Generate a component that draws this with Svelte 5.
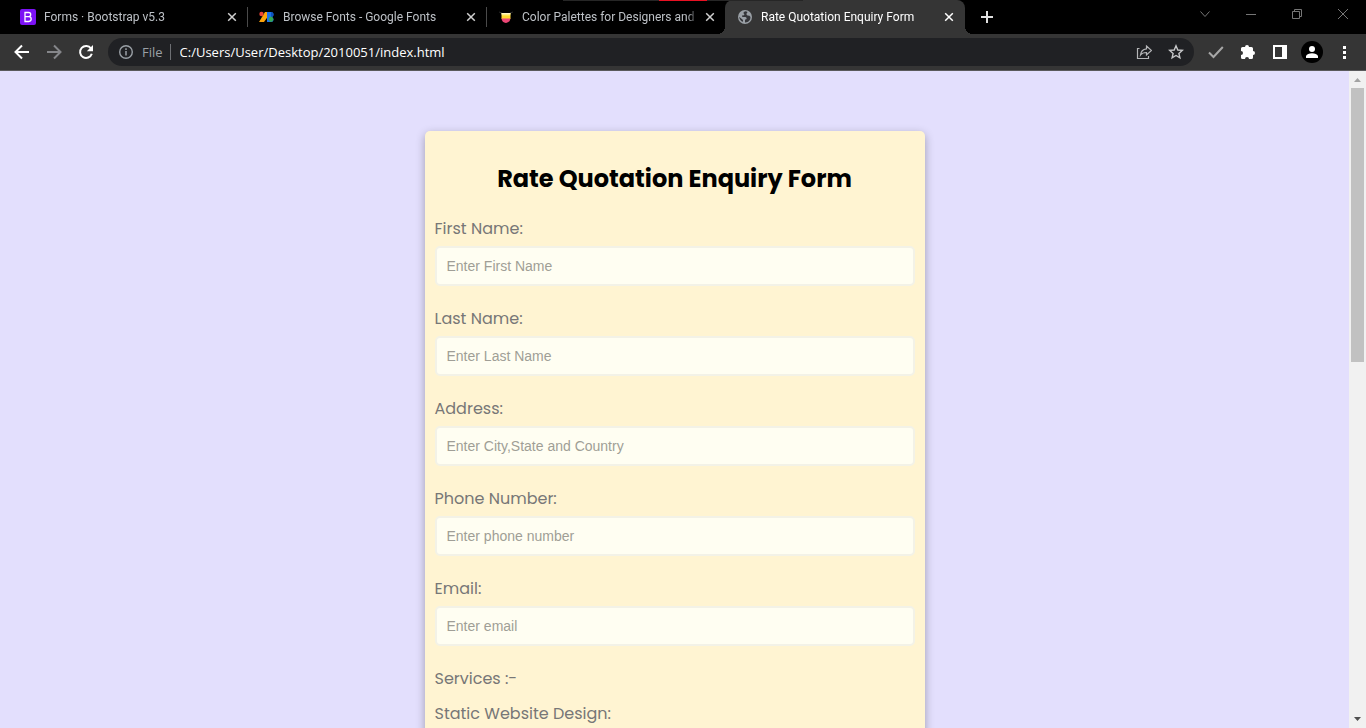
<script>
  const tabs = [
    { icon: 'bootstrap', title: 'Forms · Bootstrap v5.3' },
    { icon: 'fonts', title: 'Browse Fonts - Google Fonts' },
    { icon: 'palette', title: 'Color Palettes for Designers and' },
    { icon: 'globe', title: 'Rate Quotation Enquiry Form', active: true }
  ];
  const fields = [
    { id: 'first-name', label: 'First Name:', hint: 'Enter First Name', type: 'text' },
    { id: 'last-name', label: 'Last Name:', hint: 'Enter Last Name', type: 'text' },
    { id: 'address', label: 'Address:', hint: 'Enter City,State and Country', type: 'text' },
    { id: 'phone', label: 'Phone Number:', hint: 'Enter phone number', type: 'tel' },
    { id: 'email', label: 'Email:', hint: 'Enter email', type: 'email' }
  ];
</script>

<div class="browser">
  <div class="edge"><span></span><span class="red"></span><span></span></div>
  <header class="tabstrip">
    {#each tabs as tab}
      <div class="tab" class:active={tab.active}>
        <svg class="favicon" viewBox="0 0 16 16" aria-hidden="true">
          {#if tab.icon === 'bootstrap'}
            <rect width="16" height="16" rx="2" fill="#7c12f5" />
            <path d="M5 3.500H8.600Q10.700 3.500 10.700 5.600Q10.700 7.700 8.800 7.700H5V3.500ZM5 7.700H9Q11.200 7.700 11.200 10.100Q11.200 12.500 8.800 12.500H5V7.700Z" fill="none" stroke="#fff" stroke-width="1.300" />
          {:else if tab.icon === 'fonts'}
            <path d="M6 3H10V6L5 13H0Z" fill="#fba30a" />
            <circle cx="2.500" cy="5" r="2.200" fill="#ea4335" />
            <path d="M8 3H12A2.500 2.500 0 0 1 12 8A2.500 2.500 0 0 1 12 13H8Z" fill="#1a73e8" />
            <path d="M12 3A2.500 2.500 0 0 1 12 8Z" fill="#0d52bf" />
            <path d="M12 7.500A2.800 2.800 0 0 1 12 13A2.800 2.800 0 0 1 12 7.500Z" fill="#34a853" />
          {:else if tab.icon === 'palette'}
            <path d="M1 3L4 4M15 3L12 4" stroke="#292929" />
            <path d="M3.500 4H12.500V7H3.500Z" fill="#ffe44d" />
            <path d="M3.500 7H12.500V10H3.500Z" fill="#ffd72e" />
            <path d="M3.500 9.500H12.500Q12 13.500 8 14Q4 13.500 3.500 9.500Z" fill="#ed4776" />
            <path d="M3.500 4H12.500V5.500H3.500Z" fill="#fff6c2" />
          {:else}
            <circle cx="8" cy="8" r="7" fill="#9aa0a6" />
            <path d="M8.500 2.300Q6 2.800 6.500 4.200Q8 5 7 6.200L5 6.500L5.300 8H8.500Q10 8.300 9.600 10L8 10.700V13.500Q11.500 13.500 13.200 10.200Q14.200 7.700 12.500 6.800L10.500 6.600Q9.200 6 9.500 4.600Q10.800 4 10.200 2.800ZM2.200 7.800L6 11V12.800Q2.700 12 2.200 7.800Z" fill="#35363a" />
          {/if}
        </svg>
        <span class="tab-title">{tab.title}</span>
        <button class="close" aria-label="Close tab">
          <svg viewBox="0 0 16 16"><path d="M4.200 4.200L11.800 11.800M11.800 4.200L4.200 11.800" /></svg>
        </button>
      </div>
    {/each}
    <button class="new-tab" aria-label="New tab">
      <svg viewBox="0 0 16 16"><path d="M8 2V14M2 8H14" /></svg>
    </button>
    <div class="window-controls">
      <button aria-label="Search tabs"><svg viewBox="0 0 16 16"><path d="M3.500 5.500L8 10.500L12.500 5.500" /></svg></button>
      <button aria-label="Minimise"><svg viewBox="0 0 16 16"><path d="M3 8.500H13" /></svg></button>
      <button aria-label="Restore"><svg viewBox="0 0 16 16"><path d="M3.500 5.500H10.500V12.500H3.500ZM5.500 5.500V3.500H12.500V10.500H10.500" /></svg></button>
      <button aria-label="Close window"><svg viewBox="0 0 16 16"><path d="M3 3L13 13M13 3L3 13" /></svg></button>
    </div>
  </header>

  <nav class="toolbar">
    <button aria-label="Back"><svg viewBox="0 0 16 16"><path d="M15 8H2M8 1.500L1.500 8L8 14.500" stroke="#fff" stroke-width="2" /></svg></button>
    <button aria-label="Forward"><svg viewBox="0 0 16 16"><path d="M1 8H14M8 1.500L14.500 8L8 14.500" stroke="#85868a" stroke-width="2" /></svg></button>
    <button aria-label="Reload"><svg viewBox="0 0 16 16"><path d="M13 4.500A6 6 0 1 0 13.800 9.800" stroke="#fff" stroke-width="2" /><path d="M15 1V7.200H8.800Z" fill="#fff" /></svg></button>
    <div class="omnibox">
      <svg viewBox="0 0 16 16" aria-hidden="true"><circle cx="8" cy="8" r="6.300" stroke="#9aa0a6" stroke-width="1.400" /><path d="M8 7V11.500M8 4.300V5.900" stroke="#9aa0a6" stroke-width="1.500" /></svg>
      <span class="scheme">File</span>
      <input class="url" aria-label="Address bar" value="C:/Users/User/Desktop/2010051/index.html" />
      <button aria-label="Share"><svg viewBox="0 0 16 16"><path d="M3.500 4.500H1.500V14.500H12.500V12M10.500 2L15.500 6.500L10.500 11V8.500Q6.300 8.500 4.500 11Q5 5.500 10.500 4.800Z" stroke="#b5b6b8" stroke-width="1.200" /></svg></button>
      <button aria-label="Bookmark"><svg viewBox="0 0 16 16"><path d="M8 1.800L9.800 6L14.300 6.400L10.900 9.400L11.900 13.800L8 11.500L4.100 13.800L5.100 9.400L1.700 6.400L6.200 6Z" stroke="#c7c8ca" stroke-width="1.400" /></svg></button>
    </div>
    <button aria-label="Checker extension"><svg viewBox="0 0 16 16"><path d="M1 8.500L5.500 13L14.800 3" stroke="#a7a7a7" stroke-width="2" /></svg></button>
    <button aria-label="Extensions"><svg viewBox="0 0 16 16"><path d="M1 4.500Q1 3 2.500 3H5A2 2 0 0 1 9 3H11.500Q13 3 13 4.500V7A2 2 0 0 1 13 11V13.500Q13 15 11.500 15H9A2 2 0 0 0 5 15H2.500Q1 15 1 13.500V11A2 2 0 0 0 1 7Z" fill="#fff" /></svg></button>
    <button aria-label="Side panel"><svg viewBox="0 0 16 16"><path d="M1 1H15V15H1ZM3 3V13H10V3Z" fill="#fff" fill-rule="evenodd" /></svg></button>
    <button aria-label="Profile"><span class="avatar"><svg viewBox="0 0 16 16"><circle cx="8" cy="5" r="3" fill="#fff" /><path d="M2 14V12Q3.500 9.300 8 9.300Q12.500 9.300 14 12V14Z" fill="#fff" /></svg></span></button>
    <button aria-label="Menu"><svg viewBox="0 0 16 16"><path d="M7 2H10V5H7ZM7 7H10V10H7ZM7 12H10V15H7Z" fill="#fff" /></svg></button>
  </nav>

  <div class="viewport">
    <main>
      <form>
        <h1>Rate Quotation Enquiry Form</h1>
        {#each fields as field}
          <div class="field">
            <label for={field.id}>{field.label}</label>
            <input id={field.id} type={field.type} placeholder={field.hint} />
          </div>
        {/each}
        <p>Services :-</p>
        <div class="field">
          <label for="static-design">Static Website Design:</label>
          <input id="static-design" type="text" />
        </div>
      </form>
    </main>
    <div class="scrollbar" aria-hidden="true">
      <svg viewBox="0 0 17 17"><path d="M5 11L8.500 7L12 11Z" fill="#a3a3a3" /></svg>
      <div class="track"><div class="thumb"></div></div>
      <svg viewBox="0 0 17 17"><path d="M5 6L8.500 10L12 6Z" fill="#505050" /></svg>
    </div>
  </div>
</div>

<style>
  :global(body) { margin: 0; }
  * { box-sizing: border-box; }
  .browser {
    position: relative;
    display: flex;
    flex-direction: column;
    height: 100vh;
    overflow: hidden;
    font-family: "Segoe UI", "Open Sans", sans-serif;
  }
  button {
    display: flex;
    align-items: center;
    justify-content: center;
    flex: none;
    padding: 0;
    border: 0;
    background: none;
  }
  svg { display: block; flex: none; width: 16px; height: 16px; fill: none; }

  .edge { position: absolute; top: 0; left: 563px; z-index: 2; display: flex; }
  .edge span { width: 96px; height: 1px; background: #262626; }
  .edge .red { width: 48px; background: #e81123; }

  .tabstrip { display: flex; height: 34px; padding-left: 8px; background: #000; }
  .tab {
    position: relative;
    display: flex;
    align-items: center;
    flex: 0 1 239px;
    min-width: 0;
    padding: 0 7px 0 12px;
    color: #bdc1c6;
    font-family: "Segoe UI", Roboto, sans-serif;
    font-size: 12px;
    line-height: 16px;
  }
  .tab::after {
    content: "";
    position: absolute;
    right: -1px;
    top: 7px;
    width: 1px;
    height: 20px;
    background: #4a4a4a;
  }
  .tab:nth-child(3)::after { display: none; }
  .tab.active { flex-basis: 240px; padding-right: 8px; border-radius: 8px 8px 0 0; background: #353535; color: #fff; }
  .tab.active::before, .tab.active::after {
    content: "";
    position: absolute;
    top: auto;
    bottom: 0;
    width: 8px;
    height: 8px;
    background: radial-gradient(circle at 0 0, transparent 8px, #353535 8px);
  }
  .tab.active::before { left: -8px; }
  .tab.active::after { right: -8px; background: radial-gradient(circle at 100% 0, transparent 8px, #353535 8px); }
  .tab-title {
    flex: 1;
    min-width: 0;
    margin: 0 4px 0 8px;
    overflow: hidden;
    white-space: nowrap;
    mask-image: linear-gradient(to right, #000 94%, transparent);
  }
  .close path { stroke: #d0d0d0; stroke-width: 1.5; }
  .active .close path { stroke: #fff; }
  .new-tab { width: 28px; margin-left: 8px; }
  .new-tab path { stroke: #e0e0e0; stroke-width: 2; }
  .window-controls { display: flex; height: 28px; margin-left: auto; }
  .window-controls button { width: 46px; }
  .window-controls path { stroke: #767676; stroke-width: 1; }

  .toolbar {
    display: flex;
    align-items: center;
    flex: none;
    height: 37px;
    padding: 0 6px;
    border-bottom: 1px solid #5a5a5c;
    background: #353535;
  }
  .toolbar button { width: 32px; height: 28px; }
  .omnibox {
    display: flex;
    align-items: center;
    flex: 1;
    min-width: 0;
    height: 28px;
    margin: 0 6px;
    padding: 0 2px 0 10px;
    border-radius: 14px;
    background: #202124;
    font-size: 13px;
  }
  .scheme {
    margin-left: 8px;
    padding-right: 7px;
    border-right: 1px solid #6d6f73;
    color: #9aa0a6;
    line-height: 16px;
  }
  .url {
    flex: 1;
    min-width: 0;
    padding: 0 9px;
    border: 0;
    outline: 0;
    background: none;
    color: #fff;
    font: inherit;
  }
  .avatar {
    display: grid;
    place-items: center;
    width: 22px;
    height: 22px;
    border-radius: 50%;
    background: #000;
  }

  .viewport { display: flex; flex: 1; min-height: 0; background: #e3dffd; }
  main { flex: 1; min-width: 0; padding: 60px 16px; overflow: hidden; }
  form {
    max-width: 500px;
    margin: 0 auto;
    padding: 10px;
    border-radius: 5px;
    background: #fff4d2;
    box-shadow: 0 3px 10px rgba(0, 0, 0, 0.3);
    color: #777;
    font-family: Poppins, Inter, sans-serif;
    font-size: 16px;
    line-height: 24px;
  }
  h1 {
    margin: 20px 0;
    color: #000;
    font-size: 24px;
    font-weight: 700;
    line-height: 36px;
    text-align: center;
  }
  .field { display: flex; flex-direction: column; gap: 5px; margin-bottom: 21px; }
  .field input {
    height: 40px;
    padding: 0 10px;
    border: 2px solid #f3f2e7;
    border-radius: 5px;
    outline: 0;
    background: #fffef2;
    color: #333;
    font-family: Arial, "Liberation Sans", sans-serif;
    font-size: 14px;
  }
  .field input::placeholder { color: #a09e96; opacity: 1; }
  p { margin: 0 0 11px; }

  .scrollbar { display: flex; flex-direction: column; flex: none; width: 17px; background: #f1f1f1; }
  .scrollbar svg { width: 17px; height: 17px; }
  .track { flex: 1; padding: 0 2px; }
  .thumb { height: 44%; background: #c1c1c1; }
</style>
